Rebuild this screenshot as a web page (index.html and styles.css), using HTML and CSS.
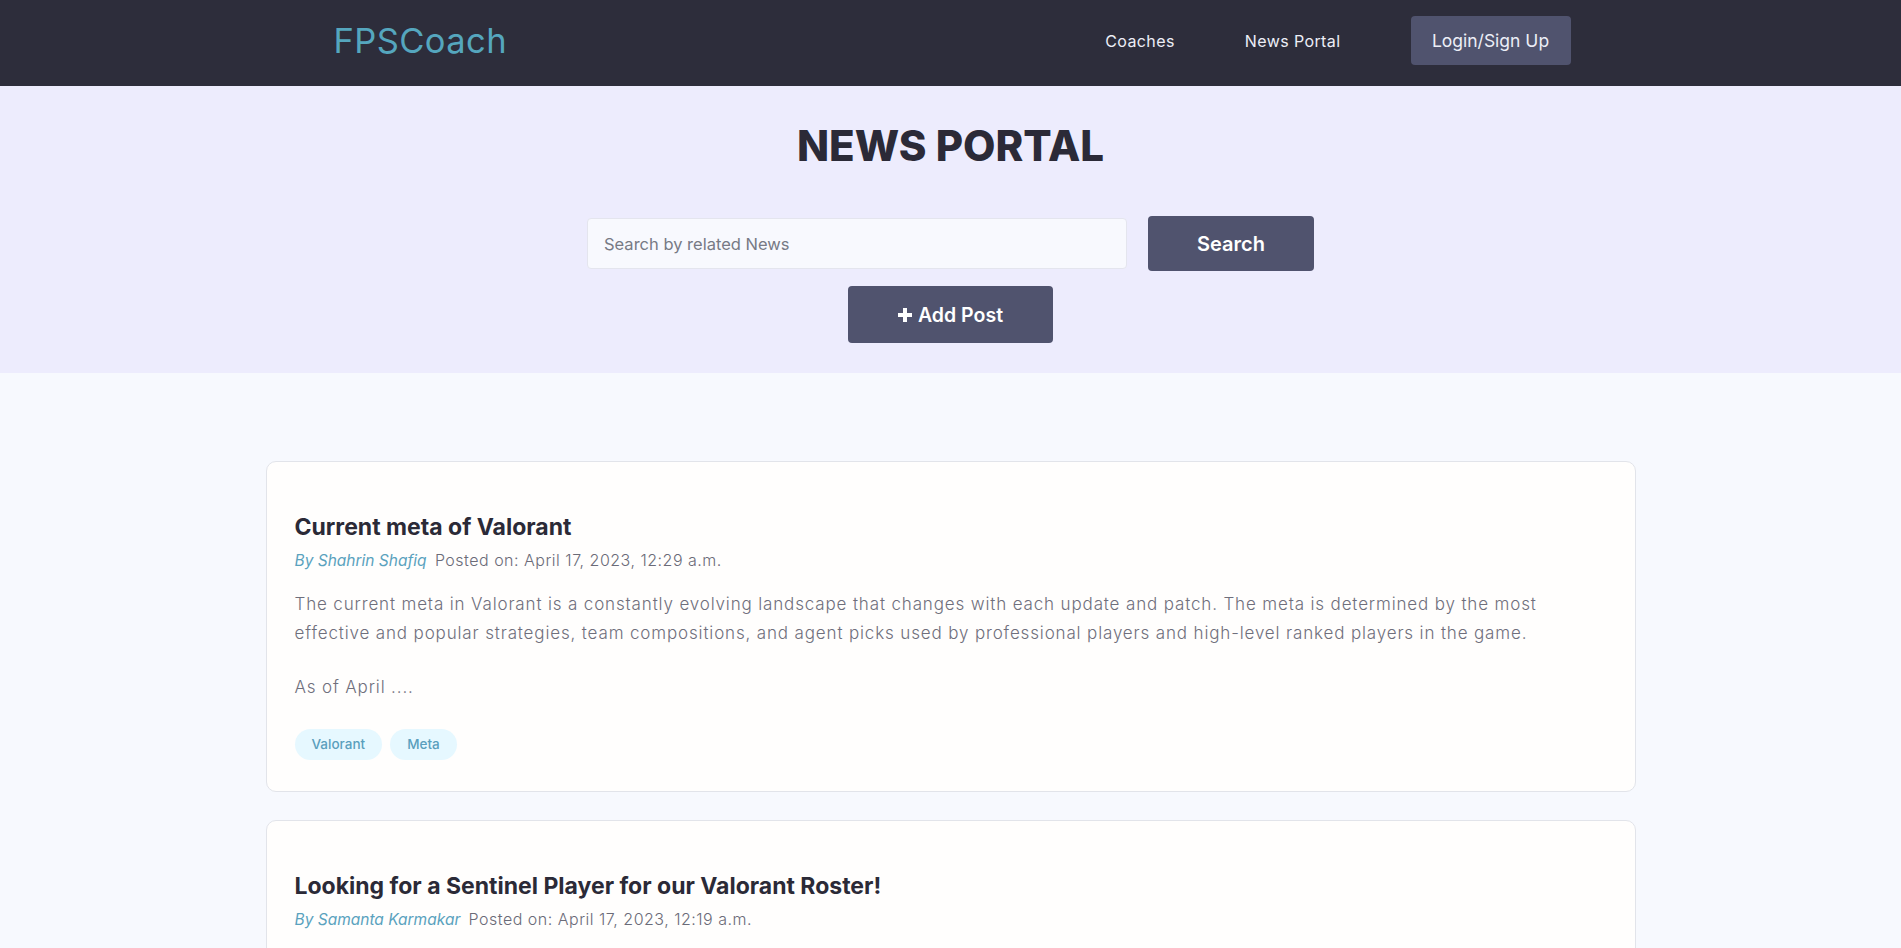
FILE: index.html
```html
<!DOCTYPE html>
<html lang="en">
<head>
<meta charset="utf-8">
<title>FPSCoach - News Portal</title>
<link rel="stylesheet" href="styles.css">
</head>
<body>
<header class="navbar">
  <div class="nav-inner">
    <a class="logo" href="#">FPSCoach</a>
    <nav class="nav-links">
      <a href="#" class="nav-link">Coaches</a>
      <a href="#" class="nav-link">News Portal</a>
      <a href="#" class="nav-btn">Login/Sign Up</a>
    </nav>
  </div>
</header>

<section class="hero">
  <h1 class="hero-title">NEWS PORTAL</h1>
  <form class="search-row">
    <input class="search-input" type="text" placeholder="Search by related News">
    <button class="btn search-btn" type="button">Search</button>
  </form>
  <button class="btn add-btn" type="button">
    <svg class="plus" viewBox="0 0 14 14" width="14" height="14" aria-hidden="true"><path d="M5 0h4v5h5v4H9v5H5V9H0V5h5z" fill="#fff"/></svg>
    Add Post
  </button>
</section>

<main class="posts">
  <article class="card">
    <h2 class="card-title">Current meta of Valorant</h2>
    <p class="meta"><em class="author">By Shahrin Shafiq</em> <span class="date">Posted on: April 17, 2023, 12:29 a.m.</span></p>
    <div class="excerpt">
      <p>The current meta in Valorant is a constantly evolving landscape that changes with each update and patch. The meta is determined by the most effective and popular strategies, team compositions, and agent picks used by professional players and high-level ranked players in the game.</p>
      <p>As of April ....</p>
    </div>
    <div class="tags">
      <span class="tag">Valorant</span>
      <span class="tag">Meta</span>
    </div>
  </article>

  <article class="card">
    <h2 class="card-title">Looking for a Sentinel Player for our Valorant Roster!</h2>
    <p class="meta"><em class="author">By Samanta Karmakar</em> <span class="date">Posted on: April 17, 2023, 12:19 a.m.</span></p>
    <div class="excerpt">
      <p>We are looking for a dedicated Sentinel player to join our Valorant roster. If you are a team player with good communication and game sense, reach out to us ....</p>
    </div>
    <div class="tags">
      <span class="tag">Valorant</span>
      <span class="tag">Recruitment</span>
    </div>
  </article>
</main>
</body>
</html>
```

FILE: styles.css
```css
* { box-sizing: border-box; }

body {
  margin: 0;
  background: #f7f9fe;
  font-family: Inter, "Open Sans", sans-serif;
  color: #2b2a37;
}

a { text-decoration: none; }

.navbar {
  background: #2d2d3b;
  height: 86px;
}

.nav-inner {
  width: 1240px;
  height: 100%;
  margin: 0 auto;
  display: flex;
  align-items: center;
  justify-content: space-between;
  padding: 0 0 5px 3px;
}

.logo {
  color: #55a6be;
  font-size: 34.5px;
  font-weight: 400;
  letter-spacing: 0.4px;
}

.nav-links {
  display: flex;
  align-items: center;
  gap: 70px;
}

.nav-link {
  color: #eceef7;
  font-size: 16px;
  letter-spacing: 0.4px;
}

.nav-btn {
  background: #50536e;
  color: #eceef7;
  font-size: 17.5px;
  width: 160px;
  height: 49px;
  border-radius: 4px;
  display: flex;
  align-items: center;
  justify-content: center;
}

.hero {
  background: #edecfd;
  display: flex;
  flex-direction: column;
  align-items: center;
  padding: 35px 0 30px;
}

.hero-title {
  margin: 0 0 45px;
  font-size: 42px;
  font-weight: 800;
  line-height: 1.2;
  color: #2b2a37;
}

.search-row {
  display: flex;
  align-items: center;
  gap: 21px;
  margin: 0 0 15px;
}

.search-input {
  width: 540px;
  height: 51px;
  background: #f8f9fe;
  border: 1px solid #e4e5ee;
  border-radius: 4px;
  padding: 0 16px;
  font-family: inherit;
  font-size: 16.5px;
  color: #333;
}

.search-input::placeholder { color: #777a85; }

.btn {
  background: #50536e;
  color: #fff;
  border: 0;
  border-radius: 4px;
  font-family: inherit;
  font-weight: 600;
  display: flex;
  align-items: center;
  justify-content: center;
}

.search-btn {
  width: 166px;
  height: 55px;
  font-size: 20px;
}

.add-btn {
  width: 205px;
  height: 57px;
  font-size: 19.5px;
  gap: 6px;
}

.plus { width: 14px; height: 14px; }

.posts {
  max-width: 1400px;
  margin: 0 auto;
  padding: 88px 15px 40px;
  display: flex;
  flex-direction: column;
  gap: 28px;
}

.card {
  background: #fffefd;
  border: 1px solid #e2e4ea;
  border-radius: 10px;
  padding: 51px 28px 31px;
}

.card-title {
  margin: 0 0 6px;
  font-size: 23px;
  font-weight: 700;
  line-height: 1.3;
  color: #2b2a37;
}

.meta {
  margin: 0 0 18px;
  font-size: 15.5px;
  line-height: 1.4;
}

.author {
  color: #5aa2be;
  font-style: italic;
  margin-right: 4px;
}

.date {
  color: #6b6b78;
  font-weight: 300;
  font-size: 16px;
  letter-spacing: 0.5px;
}

.excerpt {
  margin: 0 0 27px;
  display: flex;
  flex-direction: column;
  gap: 25px;
  font-size: 17px;
  line-height: 29px;
  letter-spacing: 0.85px;
  color: #6f6f7c;
  font-weight: 300;
}

.excerpt p { margin: 0; }

.tags {
  display: flex;
  gap: 8px;
}

.tag {
  background: #e6f8ff;
  color: #5a9fbd;
  font-size: 13.5px;
  font-weight: 500;
  height: 31px;
  padding: 0 17px;
  border-radius: 16px;
  display: flex;
  align-items: center;
}
```
